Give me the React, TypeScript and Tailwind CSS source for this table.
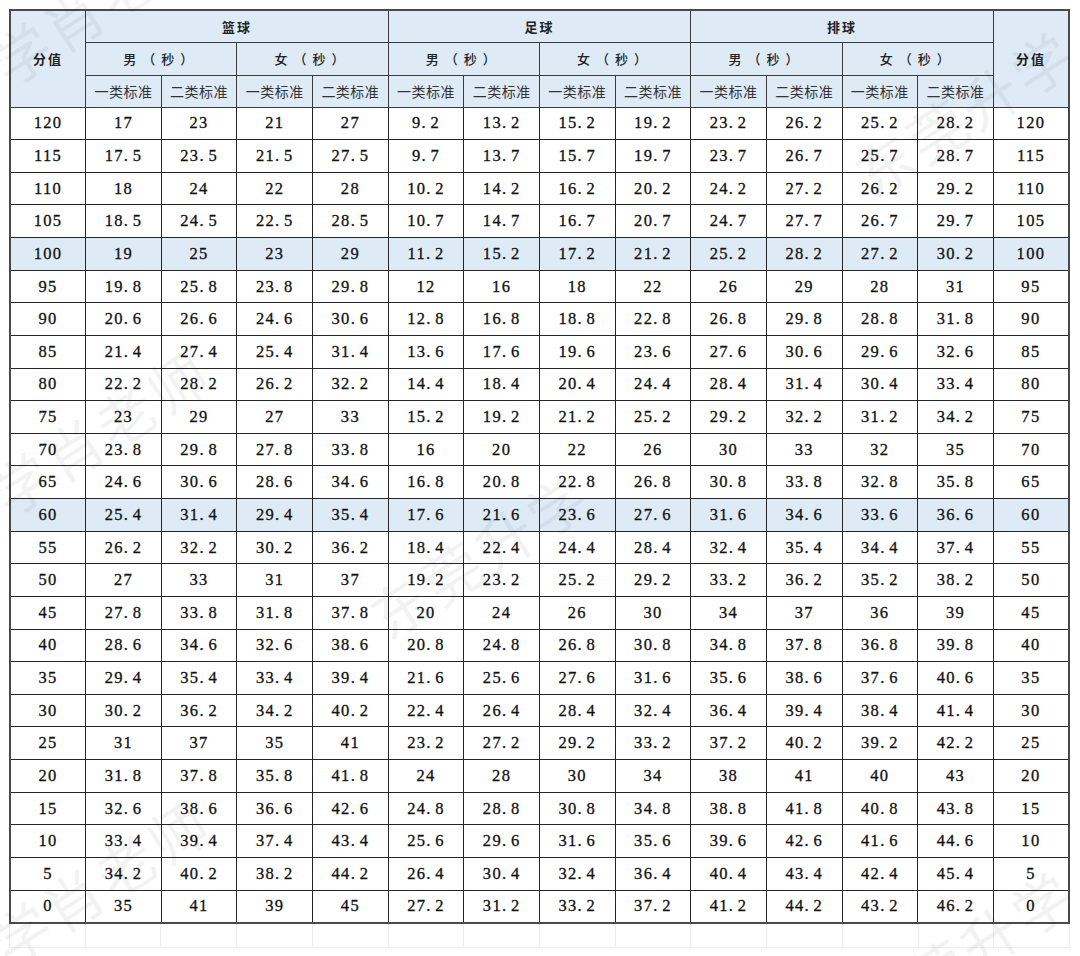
import React from "react";

const rows: [string, string[], boolean][] = [
  ["120", ["17", "23", "21", "27", "9.2", "13.2", "15.2", "19.2", "23.2", "26.2", "25.2", "28.2"], false],
  ["115", ["17.5", "23.5", "21.5", "27.5", "9.7", "13.7", "15.7", "19.7", "23.7", "26.7", "25.7", "28.7"], false],
  ["110", ["18", "24", "22", "28", "10.2", "14.2", "16.2", "20.2", "24.2", "27.2", "26.2", "29.2"], false],
  ["105", ["18.5", "24.5", "22.5", "28.5", "10.7", "14.7", "16.7", "20.7", "24.7", "27.7", "26.7", "29.7"], false],
  ["100", ["19", "25", "23", "29", "11.2", "15.2", "17.2", "21.2", "25.2", "28.2", "27.2", "30.2"], true],
  ["95", ["19.8", "25.8", "23.8", "29.8", "12", "16", "18", "22", "26", "29", "28", "31"], false],
  ["90", ["20.6", "26.6", "24.6", "30.6", "12.8", "16.8", "18.8", "22.8", "26.8", "29.8", "28.8", "31.8"], false],
  ["85", ["21.4", "27.4", "25.4", "31.4", "13.6", "17.6", "19.6", "23.6", "27.6", "30.6", "29.6", "32.6"], false],
  ["80", ["22.2", "28.2", "26.2", "32.2", "14.4", "18.4", "20.4", "24.4", "28.4", "31.4", "30.4", "33.4"], false],
  ["75", ["23", "29", "27", "33", "15.2", "19.2", "21.2", "25.2", "29.2", "32.2", "31.2", "34.2"], false],
  ["70", ["23.8", "29.8", "27.8", "33.8", "16", "20", "22", "26", "30", "33", "32", "35"], false],
  ["65", ["24.6", "30.6", "28.6", "34.6", "16.8", "20.8", "22.8", "26.8", "30.8", "33.8", "32.8", "35.8"], false],
  ["60", ["25.4", "31.4", "29.4", "35.4", "17.6", "21.6", "23.6", "27.6", "31.6", "34.6", "33.6", "36.6"], true],
  ["55", ["26.2", "32.2", "30.2", "36.2", "18.4", "22.4", "24.4", "28.4", "32.4", "35.4", "34.4", "37.4"], false],
  ["50", ["27", "33", "31", "37", "19.2", "23.2", "25.2", "29.2", "33.2", "36.2", "35.2", "38.2"], false],
  ["45", ["27.8", "33.8", "31.8", "37.8", "20", "24", "26", "30", "34", "37", "36", "39"], false],
  ["40", ["28.6", "34.6", "32.6", "38.6", "20.8", "24.8", "26.8", "30.8", "34.8", "37.8", "36.8", "39.8"], false],
  ["35", ["29.4", "35.4", "33.4", "39.4", "21.6", "25.6", "27.6", "31.6", "35.6", "38.6", "37.6", "40.6"], false],
  ["30", ["30.2", "36.2", "34.2", "40.2", "22.4", "26.4", "28.4", "32.4", "36.4", "39.4", "38.4", "41.4"], false],
  ["25", ["31", "37", "35", "41", "23.2", "27.2", "29.2", "33.2", "37.2", "40.2", "39.2", "42.2"], false],
  ["20", ["31.8", "37.8", "35.8", "41.8", "24", "28", "30", "34", "38", "41", "40", "43"], false],
  ["15", ["32.6", "38.6", "36.6", "42.6", "24.8", "28.8", "30.8", "34.8", "38.8", "41.8", "40.8", "43.8"], false],
  ["10", ["33.4", "39.4", "37.4", "43.4", "25.6", "29.6", "31.6", "35.6", "39.6", "42.6", "41.6", "44.6"], false],
  ["5", ["34.2", "40.2", "38.2", "44.2", "26.4", "30.4", "32.4", "36.4", "40.4", "43.4", "42.4", "45.4"], false],
  ["0", ["35", "41", "39", "45", "27.2", "31.2", "33.2", "37.2", "41.2", "44.2", "43.2", "46.2"], false],
];

function Num({ v }: { v: string }) {
  const parts = v.split(".");
  return (
    <span className="tracking-[1.3px]">
      {parts[0]}
      {parts.length > 1 && (
        <>
          <span className="inline-block w-[9px] text-left tracking-normal">.</span>
          {parts[1]}
        </>
      )}
    </span>
  );
}

const cjk = { fontFamily: '"Noto Sans CJK SC", "Noto Sans", sans-serif' };
const serif = { fontFamily: '"Liberation Serif", "Times New Roman", serif' };

const th = "border border-[#3c3c3c] bg-[#deeaf6] text-center align-middle text-[#222] p-0";

function Watermark({ text, left, top }: { text: string; left: string; top: string }) {
  return (
    <div
      className={`pointer-events-none absolute origin-left rotate-[-33deg] whitespace-nowrap text-[58px] leading-none tracking-[4px] text-black/[0.05] ${left} ${top}`}
      style={cjk}
    >
      {text}
    </div>
  );
}

export default function App() {
  const sports = ["篮球", "足球", "排球"];
  return (
    <div className="relative h-[956px] w-[1080px] overflow-hidden bg-white">
      <div className="pl-[9px] pt-[9px]">
        <table className="w-[1061px] table-fixed border-collapse border-2 border-[#4a4a4a]">
          <thead>
            <tr className="h-[32px]">
              <th rowSpan={3} className={`${th} text-[13px] font-semibold tracking-[2px]`} style={cjk}>
                分值
              </th>
              {sports.map((s) => (
                <th key={s} colSpan={4} className={`${th} text-[13px] font-semibold tracking-[2px]`} style={cjk}>
                  {s}
                </th>
              ))}
              <th rowSpan={3} className={`${th} text-[13px] font-semibold tracking-[2px]`} style={cjk}>
                分值
              </th>
            </tr>
            <tr className="h-[33px]">
              {sports.map((s) => (
                <React.Fragment key={s}>
                  <th colSpan={2} className={`${th} text-[13px] font-medium tracking-[6px]`} style={cjk}>
                    男（秒）
                  </th>
                  <th colSpan={2} className={`${th} text-[13px] font-medium tracking-[6px]`} style={cjk}>
                    女（秒）
                  </th>
                </React.Fragment>
              ))}
            </tr>
            <tr className="h-[32px]">
              {Array.from({ length: 6 }).map((_, i) => (
                <React.Fragment key={i}>
                  <th className={`${th} text-[14px] font-normal tracking-[0.5px] text-[#333]`} style={cjk}>
                    一类标准
                  </th>
                  <th className={`${th} text-[14px] font-normal tracking-[0.5px] text-[#333]`} style={cjk}>
                    二类标准
                  </th>
                </React.Fragment>
              ))}
            </tr>
          </thead>
          <tbody>
            {rows.map(([score, vals, hl]) => {
              const td = `border border-[#262626] p-0 pt-[1px] text-center align-middle text-[16.5px] text-[#111] [-webkit-text-stroke:0.3px_#111] ${
                hl ? "bg-[#deeaf6]" : "bg-white"
              }`;
              return (
                <tr key={score} className="h-[32.64px]">
                  <td className={td} style={serif}>
                    <Num v={score} />
                  </td>
                  {vals.map((v, i) => (
                    <td key={i} className={td} style={serif}>
                      <Num v={v} />
                    </td>
                  ))}
                  <td className={td} style={serif}>
                    <Num v={score} />
                  </td>
                </tr>
              );
            })}
          </tbody>
        </table>
        <div className="flex h-[24px] w-[1061px] border-b border-l border-[#ececec]">
          {Array.from({ length: 14 }).map((_, i) => (
            <div key={i} className="flex-1 border-r border-[#ececec]" />
          ))}
        </div>
      </div>

      <Watermark text="东莞升学肖老师" left="left-[-160px]" top="top-[140px]" />
      <Watermark text="东莞升学肖老师" left="left-[-160px]" top="top-[570px]" />
      <Watermark text="东莞升学" left="left-[375px]" top="top-[592px]" />
      <Watermark text="东莞升学肖老师" left="left-[-160px]" top="top-[1020px]" />
      <Watermark text="东莞升学" left="left-[860px]" top="top-[150px]" />
      <Watermark text="东莞升学" left="left-[860px]" top="top-[990px]" />
    </div>
  );
}
